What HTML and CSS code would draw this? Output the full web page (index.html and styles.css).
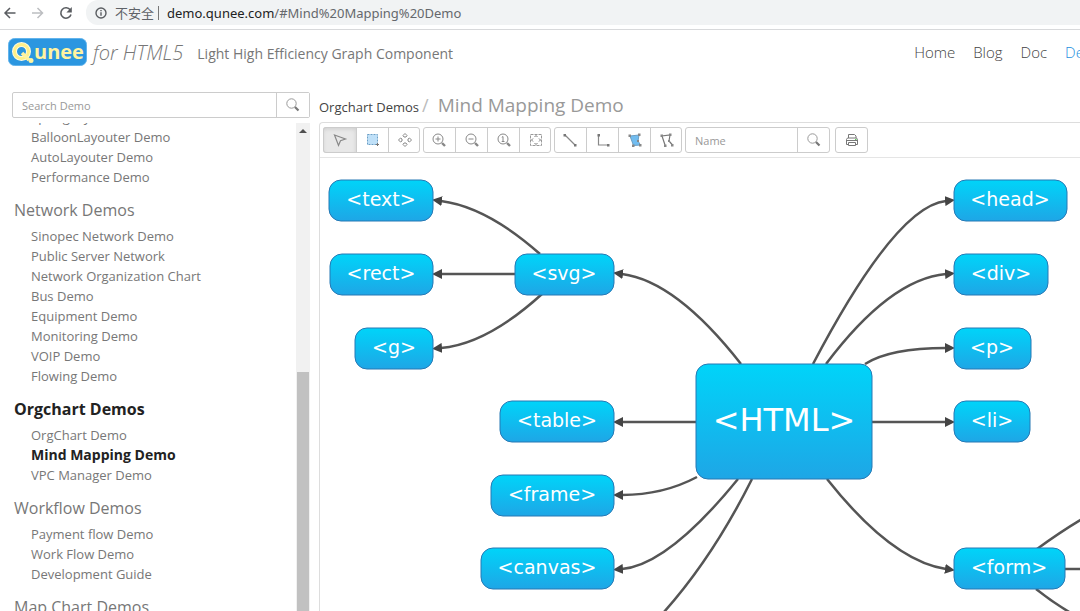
FILE: index.html
```html
<!DOCTYPE html>
<html lang="en">
<head>
<meta charset="utf-8">
<title>Qunee for HTML5 - Mind Mapping Demo</title>
<link rel="stylesheet" href="styles.css">
</head>
<body>
<div class="browser-bar">
  <button class="nav-btn" aria-label="Back"><svg width="14" height="14" viewBox="0 0 14 14"><path d="M12.5 7H2M7 2L2 7l5 5" fill="none" stroke="#5a5d61" stroke-width="1.5"/></svg></button>
  <button class="nav-btn" aria-label="Forward"><svg width="14" height="14" viewBox="0 0 14 14"><path d="M1 7h10.500M6.500 2l5 5-5 5" fill="none" stroke="#bcbec1" stroke-width="1.5"/></svg></button>
  <button class="nav-btn" aria-label="Reload"><svg width="14" height="14" viewBox="0 0 14 14"><path d="M11.300 4A5.200 5.200 0 1 0 12 8.500" fill="none" stroke="#5a5d61" stroke-width="1.600"/><path d="M12.800 1v5.400H7.400z" fill="#5a5d61"/></svg></button>
  <div class="address">
    <svg width="12" height="12" viewBox="0 0 12 12"><circle cx="6" cy="6" r="5" fill="none" stroke="#5a5d61" stroke-width="1.400"/><path d="M6 5.200v3.600M6 3v1.300" stroke="#5a5d61" stroke-width="1.400"/></svg>
    <span class="insecure">不安全</span>
    <span class="bar"></span>
    <span class="url"><b>demo.qunee.com</b>/#Mind%20Mapping%20Demo</span>
  </div>
</div>

<header class="header">
  <a class="logo" href="#" aria-label="Qunee">
    <svg width="79" height="28" viewBox="0 0 79 28">
      <rect x="0.500" y="0.500" width="78" height="27" rx="6" fill="#2b96e0" stroke="#63b4ec"/>
      <circle cx="13.500" cy="13.500" r="7" fill="none" stroke="#fffbe0" stroke-width="5"/>
      <circle cx="13.500" cy="13.500" r="7" fill="none" stroke="#fff08a" stroke-width="3"/>
      <path d="M14 15l7 7" stroke="#fff3a0" stroke-width="3.500"/>
      <circle cx="23" cy="22.500" r="2.500" fill="#fff3a0"/>
      <text class="logo-text" x="26" y="21">unee</text>
    </svg>
  </a>
  <span class="for-html">for HTML5</span>
  <span class="tagline">Light High Efficiency Graph Component</span>
  <nav class="top-nav">
    <a href="#">Home</a><a href="#">Blog</a><a href="#">Doc</a><a class="current" href="#">Demo</a>
  </nav>
</header>

<div class="page">
  <aside class="sidebar">
    <form class="search">
      <input type="text" placeholder="Search Demo" aria-label="Search Demo">
      <button type="button" aria-label="Search"><svg width="14" height="14" viewBox="0 0 14 14"><circle cx="5.500" cy="5.500" r="4.700" fill="none" stroke="#999"/><path d="M9 9l3.500 3.500" stroke="#777" stroke-width="2.200"/></svg></button>
    </form>
    <div class="scroll-area">
      <div class="demo-list">
        <ul class="demos"><li><a href="#">SpringLayouter Demo</a></li><li><a href="#">BalloonLayouter Demo</a></li><li><a href="#">AutoLayouter Demo</a></li><li><a href="#">Performance Demo</a></li></ul>
        <h2>Network Demos</h2>
        <ul class="demos"><li><a href="#">Sinopec Network Demo</a></li><li><a href="#">Public Server Network</a></li><li><a href="#">Network Organization Chart</a></li><li><a href="#">Bus Demo</a></li><li><a href="#">Equipment Demo</a></li><li><a href="#">Monitoring Demo</a></li><li><a href="#">VOIP Demo</a></li><li><a href="#">Flowing Demo</a></li></ul>
        <h2 class="active">Orgchart Demos</h2>
        <ul class="demos"><li><a href="#">OrgChart Demo</a></li><li class="active"><a href="#">Mind Mapping Demo</a></li><li><a href="#">VPC Manager Demo</a></li></ul>
        <h2>Workflow Demos</h2>
        <ul class="demos"><li><a href="#">Payment flow Demo</a></li><li><a href="#">Work Flow Demo</a></li><li><a href="#">Development Guide</a></li></ul>
        <h2>Map Chart Demos</h2>
      </div>
      <div class="scrollbar"><span class="arrow-up"></span><span class="thumb"></span></div>
    </div>
  </aside>

  <main class="main">
    <div class="crumbs"><span class="parent">Orgchart Demos</span><span class="slash">/</span><h1>Mind Mapping Demo</h1></div>
    <section class="panel">
      <div class="toolbar">
        <div class="group">
          <button class="pressed" aria-label="Select"><svg width="16" height="16" viewBox="0 0 16 16"><path d="M2.500 3l11 4-5 1.800L6.500 13.500z" fill="none" stroke="#888" stroke-width="1.200"/></svg></button>
          <button aria-label="Rectangle select"><svg width="16" height="16" viewBox="0 0 16 16"><path d="M2.500 2.500h10v10h-10z" fill="#bfe0f8" stroke="#6a9fc6" stroke-dasharray="2 1"/><path d="M12.500 11v3M11 12.500h3" stroke="#777"/></svg></button>
          <button aria-label="Pan"><svg width="16" height="16" viewBox="0 0 16 16" fill="none" stroke="#888"><path d="M8 1.500l2 2-1 1.500H7L6 3.500zM8 14.500l2-2L9 11H7l-1 1.500zM1.500 8l2-2L5 7v2l-1.500 1zM14.500 8l-2-2L11 7v2l1.500 1z"/></svg></button>
        </div>
        <div class="group">
          <button aria-label="Zoom in"><svg width="16" height="16" viewBox="0 0 16 16" fill="none" stroke="#888"><circle cx="7" cy="7" r="5"/><path d="M4.500 7h5M7 4.500v5"/><path d="M11 11l3 3" stroke-width="2.400"/></svg></button>
          <button aria-label="Zoom out"><svg width="16" height="16" viewBox="0 0 16 16" fill="none" stroke="#888"><circle cx="7" cy="7" r="5"/><path d="M4.500 7h5"/><path d="M11 11l3 3" stroke-width="2.400"/></svg></button>
          <button aria-label="Actual size"><svg width="16" height="16" viewBox="0 0 16 16" fill="none" stroke="#888"><circle cx="7" cy="7" r="5"/><path d="M5.800 5.300L7 4.500v5M5.700 9.500h2.800"/><path d="M11 11l3 3" stroke-width="2.400"/></svg></button>
          <button aria-label="Overview"><svg width="16" height="16" viewBox="0 0 16 16" fill="none" stroke="#999"><path d="M2.500 2.500h11v11h-11z" stroke-dasharray="3 1"/><path d="M6.500 5L8 3.500 9.500 5M6.500 11L8 12.500 9.500 11M5 6.500L3.500 8 5 9.500M11 6.500L12.500 8 11 9.500" stroke="#777"/></svg></button>
        </div>
        <div class="group">
          <button aria-label="Edge"><svg width="16" height="16" viewBox="0 0 16 16"><path d="M3 3l10 10" stroke="#888" stroke-width="1.200"/><path d="M1.500 2H4v2.500H1.500zM12 12h2.500v2.500H12z" fill="#777"/></svg></button>
          <button aria-label="Orthogonal edge"><svg width="16" height="16" viewBox="0 0 16 16"><path d="M3.500 3v10H13" fill="none" stroke="#888" stroke-width="1.200"/><path d="M2.500 2H5v2.500H2.500zM12 12h2.500v2.500H12z" fill="#777"/></svg></button>
          <button aria-label="Shape"><svg width="16" height="16" viewBox="0 0 16 16"><path d="M3 4l9-1-1 6 2.500 4-7 .5z" fill="#72bdf0" stroke="#6a9fc6"/><path d="M1.500 2.500H4V5H1.500zM11 1.500h2.500V4H11zM10 8h2v2h-2zM12 12h2.500v2.500H12zM5 12.500h2.500V15H5z" fill="#888"/></svg></button>
          <button aria-label="Line"><svg width="16" height="16" viewBox="0 0 16 16"><path d="M6 13L3 4l8-1-1 6 3.500 4" fill="none" stroke="#777" stroke-width="1.200"/><path d="M1.500 2.500H4V5H1.500zM10 1.500h2.500V4H10zM9 8h2v2H9zM12 12h2.500v2.500H12zM5 12.500h2.500V15H5z" fill="#888"/></svg></button>
        </div>
        <div class="group name-search">
          <input type="text" placeholder="Name" aria-label="Name">
          <button aria-label="Find"><svg width="14" height="14" viewBox="0 0 14 14"><circle cx="5.500" cy="5.500" r="4.700" fill="none" stroke="#999"/><path d="M9 9l3.500 3.500" stroke="#777" stroke-width="2.200"/></svg></button>
        </div>
        <div class="group">
          <button aria-label="Print"><svg width="16" height="16" viewBox="0 0 16 16" fill="none" stroke="#777"><path d="M4.500 6V2.500h6l1.500 1.500v2M4 12.500H2.500v-5l1-1.500h9l1 1.500v5H12"/><path d="M3 8.500h10" /><path d="M4.500 10.500h7v3h-7z"/><path d="M11 7.500h1.500" stroke="#5c5"/></svg></button>
        </div>
      </div>
      <svg class="graph" role="img" aria-label="Mind map of HTML elements">
        <defs>
          <linearGradient id="fill" x1="0" y1="0" x2="0" y2="1"><stop offset="0" stop-color="#00d4f9"/><stop offset="1" stop-color="#1ea6e6"/></linearGradient>
          <marker id="arrow" markerUnits="userSpaceOnUse" markerWidth="10" markerHeight="10" refX="1" refY="5" orient="auto"><path d="M0 0l10 5-10 5z" fill="#444"/></marker>
        </defs>
        <g transform="translate(-320 -158)">
          <g class="edges">
            <path d="M540 254Q487 207 441 201"/>
            <path d="M515 274H441"/>
            <path d="M542 294Q487 344 441 348"/>
            <path d="M741 364Q676 281 622 274"/>
            <path d="M696 422H622"/>
            <path d="M697 477Q663 495 622 495"/>
            <path d="M738 479Q668 565 622 569"/>
            <path class="open" d="M752 479Q713 557 664 612"/>
            <path d="M813 364Q896 206 946 201"/>
            <path d="M826 364Q890 279 946 274"/>
            <path d="M865 364Q890 348 946 348"/>
            <path d="M872 422H946"/>
            <path d="M827 479Q892 561 946 569"/>
            <path class="open" d="M1037 549Q1060 532 1082 519"/>
            <path class="open" d="M1065 569H1082"/>
            <path class="open" d="M1036 589Q1060 608 1082 619"/>
          </g>
          <g class="nodes">
            <rect x="329" y="180" width="104" height="41" rx="12"/><text x="381" y="206">&lt;text&gt;</text>
            <rect x="330" y="254" width="103" height="41" rx="12"/><text x="381" y="280">&lt;rect&gt;</text>
            <rect x="355" y="328" width="78" height="41" rx="12"/><text x="394" y="354">&lt;g&gt;</text>
            <rect x="515" y="254" width="99" height="41" rx="12"/><text x="564" y="280">&lt;svg&gt;</text>
            <rect x="500" y="401" width="114" height="41" rx="12"/><text x="557" y="427">&lt;table&gt;</text>
            <rect x="491" y="475" width="123" height="41" rx="12"/><text x="552" y="501">&lt;frame&gt;</text>
            <rect x="481" y="548" width="133" height="41" rx="12"/><text x="547" y="574">&lt;canvas&gt;</text>
            <rect x="696" y="364" width="176" height="115" rx="12"/><text class="root" x="784" y="431">&lt;HTML&gt;</text>
            <rect x="954" y="180" width="113" height="41" rx="12"/><text x="1010" y="206">&lt;head&gt;</text>
            <rect x="954" y="254" width="94" height="41" rx="12"/><text x="1001" y="280">&lt;div&gt;</text>
            <rect x="954" y="328" width="77" height="41" rx="12"/><text x="992" y="354">&lt;p&gt;</text>
            <rect x="954" y="401" width="76" height="41" rx="12"/><text x="992" y="427">&lt;li&gt;</text>
            <rect x="954" y="548" width="111" height="41" rx="12"/><text x="1009" y="574">&lt;form&gt;</text>
          </g>
        </g>
      </svg>
    </section>
  </main>
</div>
</body>
</html>
```
FILE: styles.css
```css
* { box-sizing: border-box; }
body {
  margin: 0;
  height: 100vh;
  display: flex;
  flex-direction: column;
  overflow: hidden;
  background: #fff;
  color: #777;
  font-family: "Open Sans", "Noto Sans CJK SC", sans-serif;
}
a { color: inherit; text-decoration: none; }
button, input { font: inherit; color: inherit; margin: 0; }
button {
  border: 0;
  background: #fff;
  padding: 0;
  display: flex;
  align-items: center;
  justify-content: center;
}
ul { list-style: none; margin: 0; padding: 0; }
h1, h2 { margin: 0; font-weight: 400; }
svg { flex: none; }

.browser-bar {
  flex: none;
  display: flex;
  align-items: center;
  gap: 14px;
  height: 30px;
  padding: 0 0 4px 3px;
  border-bottom: 1px solid #d8d9db;
}
.nav-btn { width: 14px; height: 24px; }
.address {
  flex: 1;
  display: flex;
  align-items: center;
  height: 25px;
  margin-left: -1px;
  padding-left: 9px;
  border-radius: 12px 0 0 12px;
  background: #f1f3f4;
  font: 13px "Noto Sans", "Noto Sans CJK SC", sans-serif;
}
.insecure { margin-left: 8px; color: #5f6368; }
.bar { width: 1px; height: 14px; margin: 0 8px 0 4px; background: #777; }
.url { color: #65686c; }
.url b { font-weight: 400; color: #222; }

.header {
  flex: none;
  display: flex;
  align-items: center;
  height: 62px;
  padding: 0 0 18px 8px;
  overflow: hidden;
}
.logo { display: flex; }
.logo-text { font: 700 20px "Open Sans", sans-serif; fill: #fff3a0; }
.for-html { margin-left: 6px; font-size: 20px; font-style: italic; font-weight: 300; color: #777; }
.tagline { margin-left: 14px; padding-top: 2px; font-size: 14px; }
.top-nav {
  display: flex;
  gap: 18px;
  margin-left: auto;
  margin-right: -26px;
  font-size: 15px;
  font-weight: 300;
  color: #444;
}
.top-nav .current { color: #1e8fe0; }

.page { flex: 1; min-height: 0; display: flex; gap: 9px; }
.sidebar { flex: none; width: 310px; display: flex; flex-direction: column; }
.search {
  flex: none;
  display: flex;
  height: 26px;
  margin: 0 0 5px 12px;
  border: 1px solid #ccc;
  border-radius: 2px;
}
.search input {
  flex: 1;
  min-width: 0;
  padding: 0 9px;
  border: 0;
  outline: 0;
  background: none;
  font-size: 11px;
}
.search button { width: 33px; border-left: 1px solid #ccc; }
::placeholder { color: #999; opacity: 1; }
.scroll-area { flex: 1; min-height: 0; display: flex; overflow: hidden; }
.demo-list { flex: 1; margin-top: -16px; padding-left: 14px; }
.demo-list h2 { margin: 11px 0 4px; font-size: 16px; line-height: 24px; }
.demo-list .active { font-weight: 700; color: #222; }
.demos { padding-left: 17px; font-size: 13px; line-height: 20px; }
.demos .active { font-size: 14px; }
.scrollbar {
  width: 14px;
  display: flex;
  flex-direction: column;
  align-items: center;
  justify-content: space-between;
  background: #f1f1f1;
}
.arrow-up {
  margin-top: 6px;
  border: 4px solid transparent;
  border-top: 0;
  border-bottom-color: #505050;
}
.thumb { width: 12px; height: 49%; background: #c1c1c1; }

.main { flex: 1; min-width: 0; display: flex; flex-direction: column; }
.crumbs {
  flex: none;
  display: flex;
  align-items: baseline;
  height: 30px;
  line-height: 26px;
}
.parent { font-size: 13px; color: #444; }
.slash { margin: 0 9px 0 3px; font-size: 18px; color: #bbb; }
.crumbs h1 { font-size: 19px; color: #999; }
.panel {
  flex: 1;
  min-height: 0;
  display: flex;
  flex-direction: column;
  border: 1px solid #ddd;
  border-width: 1px 0 0 1px;
  border-radius: 4px 0 0 0;
}
.toolbar {
  flex: none;
  display: flex;
  align-items: center;
  gap: 3px;
  height: 35px;
  padding-left: 3px;
  border-bottom: 1px solid #e5e5e5;
}
.group {
  display: flex;
  height: 26px;
  outline: 1px solid #ccc;
  outline-offset: -1px;
  border-radius: 3px;
  overflow: hidden;
}
.group button { width: 32px; }
.group > * + * { border-left: 1px solid #ccc; }
.group .pressed,
.group input + button,
.group button:only-child { width: 33px; }
.group .pressed { background: #e8e8e8; box-shadow: inset 0 2px 4px #ccc; }
.name-search input { width: 112px; padding: 0 10px; border: 0; outline: 0; background: none; font-size: 11px; }
.name-search + .group { margin-left: 2px; }
.graph { flex: 1; width: 100%; min-height: 0; display: block; }

.edges path { fill: none; stroke: #555; stroke-width: 2.5; marker-end: url(#arrow); }
.edges .open { marker-end: none; }
.nodes rect { fill: url(#fill); stroke: #2678b4; }
.nodes text { font: 19px "DejaVu Sans", sans-serif; fill: #fff; text-anchor: middle; }
.nodes .root { font-size: 32px; }
```
